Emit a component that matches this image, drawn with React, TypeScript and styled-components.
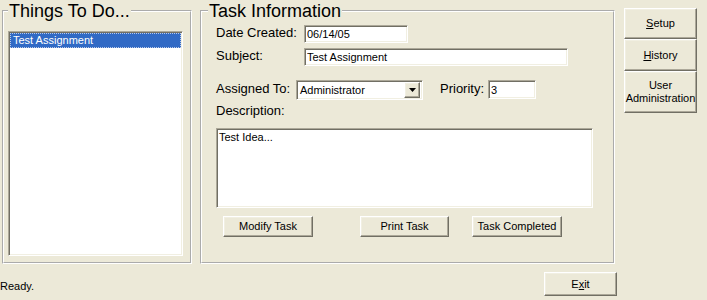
import React from 'react';
import styled, {createGlobalStyle} from 'styled-components';

// classic XP "Windows Classic" palette
const face = '#ECE9D8';
const shadow = '#ACA899';
const darkShadow = '#716F64';
const light = '#F1EFE2';

const GlobalStyle = createGlobalStyle`
  html, body {
    margin: 0;
    background: ${face};
  }
  body {
    font-family: "Liberation Sans", Arial, sans-serif;
    color: #000;
  }
`;

const Page = styled.div`
  width: 707px;
  height: 300px;
  box-sizing: border-box;
  padding-top: 2px;
  display: flex;
  flex-direction: column;
`;

const TopRow = styled.div`
  display: flex;
  align-items: flex-start;
  column-gap: 8px;
  padding-left: 2px;
`;

const Group = styled.fieldset<{ $w: number; $pl: number }>`
  margin: 0;
  width: ${p => p.$w}px;
  height: 262px;
  box-sizing: border-box;
  min-inline-size: 0;
  padding: 0 0 0 ${p => p.$pl}px;
  border: 2px groove #fff;
`;

const Legend = styled.legend<{ $ml: number }>`
  font-size: 18px;
  line-height: 18px;
  padding: 0 1px;
  margin-left: ${p => p.$ml}px;
`;

const sunken = `
  border: 1px solid;
  border-color: ${shadow} #fff #fff ${shadow};
  box-shadow: inset 1px 1px ${darkShadow}, inset -1px -1px ${light};
  background: #fff;
  box-sizing: border-box;
`;

const ListBox = styled.div`
  ${sunken};
  width: 175px;
  height: 225px;
  margin-top: 11px;
  padding: 1px 1px;
`;

const ListItem = styled.div<{ $selected?: boolean }>`
  height: 15px;
  line-height: 13px;
  font-size: 11px;
  padding-left: 2px;
  box-sizing: border-box;
  color: ${p => (p.$selected ? '#fff' : '#000')};
  background: ${p => (p.$selected ? '#316AC5' : 'transparent')};
  border: 1px dotted ${p => (p.$selected ? '#b8c8e8' : 'transparent')};
`;

const Row = styled.div<{ $top: number }>`
  display: flex;
  align-items: flex-start;
  margin-top: ${p => p.$top}px;
`;

const Label = styled.label<{ $w?: number; $pt?: number; $ml?: number }>`
  font-size: 13px;
  line-height: 15px;
  width: ${p => (p.$w ? `${p.$w}px` : 'auto')};
  padding-top: ${p => p.$pt || 0}px;
  margin-left: ${p => p.$ml || 0}px;
  flex-shrink: 0;
`;

const TextField = styled.input<{ $w: number; $h?: number }>`
  ${sunken};
  width: ${p => p.$w}px;
  height: ${p => p.$h || 18}px;
  margin: 0;
  padding: 0 2px;
  font: 11px "Liberation Sans", Arial, sans-serif;
  outline: none;
`;

const Combo = styled.div`
  ${sunken};
  width: 127px;
  height: 20px;
  display: flex;
  align-items: center;
  padding: 2px;
  font-size: 11px;
`;

const ComboText = styled.span`
  flex: 1;
  padding-left: 1px;
`;

const raised = `
  border: 1px solid;
  border-color: #fff ${darkShadow} ${darkShadow} #fff;
  box-shadow: inset -1px -1px ${shadow}, inset 1px 1px ${light};
  background: ${face};
  box-sizing: border-box;
`;

const DropButton = styled.span`
  ${raised};
  width: 16px;
  height: 16px;
  display: flex;
  align-items: center;
  justify-content: center;
`;

const Memo = styled.textarea`
  ${sunken};
  display: block;
  width: 377px;
  height: 80px;
  margin: 10px 0 0 0;
  padding: 2px 2px;
  resize: none;
  font: 11px "Liberation Sans", Arial, sans-serif;
  outline: none;
`;

const Button = styled.button<{ $w: number; $h: number; $ml?: number }>`
  ${raised};
  width: ${p => p.$w}px;
  height: ${p => p.$h}px;
  margin: 0 0 0 ${p => p.$ml || 0}px;
  padding: 0;
  font: 11px/13px "Liberation Sans", Arial, sans-serif;
  color: #000;
  flex-shrink: 0;
`;

const Key = styled.span`
  text-decoration: underline;
`;

const SideColumn = styled.div`
  display: flex;
  flex-direction: column;
  margin: 6px 0 0 1px;
`;

const BottomBar = styled.div`
  display: flex;
  margin-top: 8px;
`;

const Status = styled.span`
  font-size: 11px;
  line-height: 13px;
  align-self: flex-end;
  margin-bottom: 3px;
`;

const Spacer = styled.div`
  flex: 1;
`;

const App: React.FC = () => {
    return (
        <Page>
            <GlobalStyle/>
            <TopRow>
                <Group $w={190} $pl={4}>
                    <Legend $ml={0}>Things To Do...</Legend>
                    <ListBox>
                        <ListItem $selected>Test Assignment</ListItem>
                    </ListBox>
                </Group>

                <Group $w={415} $pl={14}>
                    <Legend $ml={-8}>Task Information</Legend>
                    <Row $top={5}>
                        <Label $w={88}>Date Created:</Label>
                        <TextField $w={104} defaultValue="06/14/05" readOnly/>
                    </Row>
                    <Row $top={5}>
                        <Label $w={88}>Subject:</Label>
                        <TextField $w={264} defaultValue="Test Assignment" readOnly/>
                    </Row>
                    <Row $top={14}>
                        <Label $w={80} $pt={1}>Assigned To:</Label>
                        <Combo>
                            <ComboText>Administrator</ComboText>
                            <DropButton>
                                <svg width="7" height="4" viewBox="0 0 7 4">
                                    <path d="M0 0h7L3.5 4z" fill="#000"/>
                                </svg>
                            </DropButton>
                        </Combo>
                        <Label $ml={17} $w={48} $pt={1}>Priority:</Label>
                        <TextField $w={48} $h={19} defaultValue="3" readOnly/>
                    </Row>
                    <Row $top={3}>
                        <Label>Description:</Label>
                    </Row>
                    <Memo defaultValue="Test Idea..." readOnly/>
                    <Row $top={8}>
                        <Button $w={90} $h={21} $ml={7}>Modify Task</Button>
                        <Button $w={89} $h={21} $ml={47}>Print Task</Button>
                        <Button $w={90} $h={21} $ml={23}>Task Completed</Button>
                    </Row>
                </Group>

                <SideColumn>
                    <Button $w={73} $h={31}><Key>S</Key>etup</Button>
                    <Button $w={73} $h={32}><Key>H</Key>istory</Button>
                    <Button $w={73} $h={42}>User<br/>Administration</Button>
                </SideColumn>
            </TopRow>

            <BottomBar>
                <Status>Ready.</Status>
                <Spacer/>
                <Button $w={73} $h={24} style={{marginRight: 90}}>E<Key>x</Key>it</Button>
            </BottomBar>
        </Page>
    );
};

export default App;
